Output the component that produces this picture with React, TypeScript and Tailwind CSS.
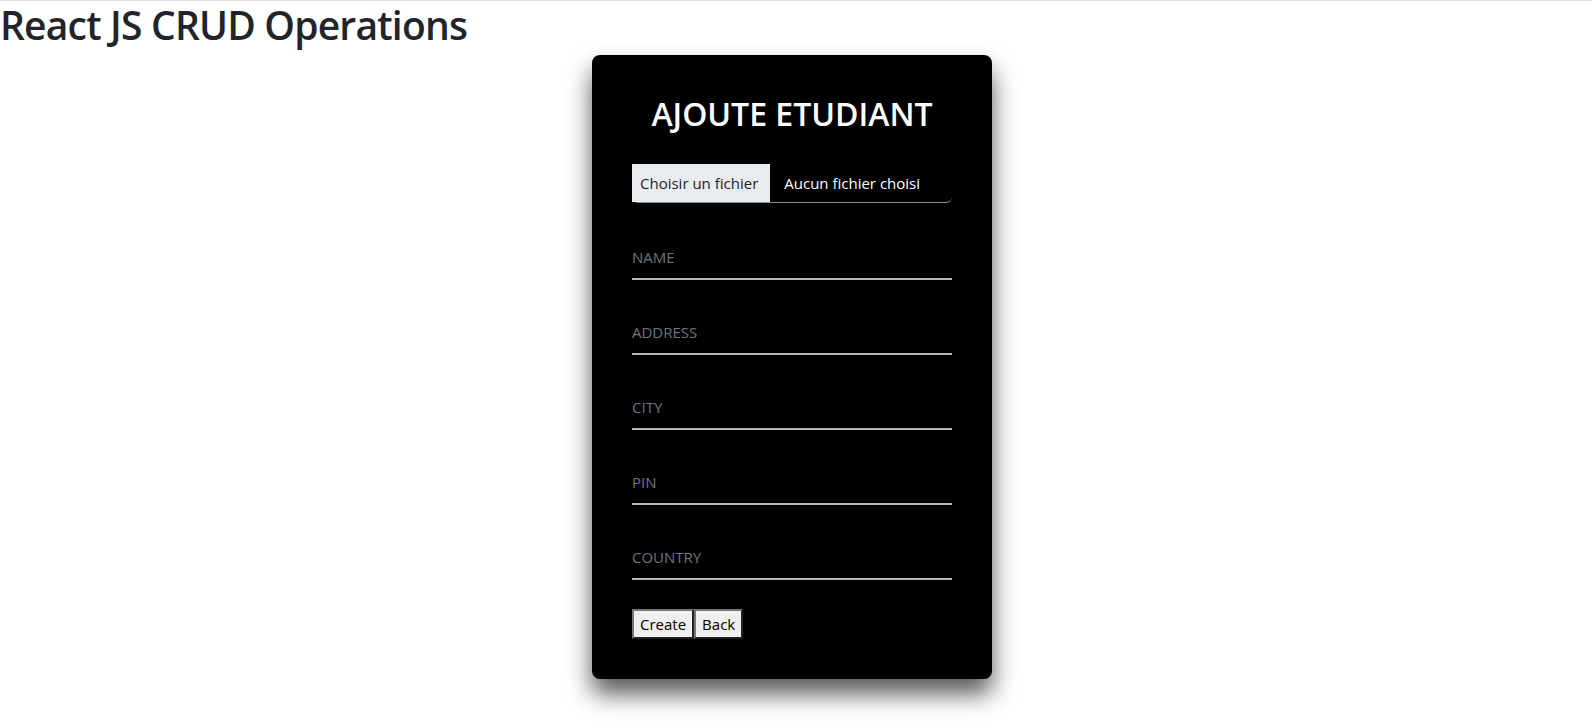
import React from "react";

const font = { fontFamily: '"Segoe UI", "Open Sans", "Noto Sans", sans-serif' };

function Field({ label, first }: { label: string; first?: boolean }) {
  return (
    <div className={first ? "mt-[37px]" : "mt-[35px]"}>
      <input
        placeholder={label}
        className="block w-full h-[40px] bg-transparent border-0 border-b-2 border-[#b8b8b8] outline-none text-[15px] text-white placeholder:text-[#6c757d] px-0 pt-0 pb-[5px]"
      />
    </div>
  );
}

export default function App() {
  return (
    <div className="min-h-[727px] bg-white border-t border-[#e0e0e0]" style={font}>
      <h1 className="m-0 text-[39px] leading-[48px] font-semibold tracking-[-0.8px] text-[#212529]">React JS CRUD Operations</h1>
      <div className="pr-2">
        <div className="mx-auto mt-[6px] w-[400px] bg-black rounded-lg px-10 pt-10 pb-10 shadow-[0_15px_25px_rgba(0,0,0,0.65)]">
          <h2 className="m-0 text-center text-[32px] leading-[38px] font-semibold text-white">AJOUTE ETUDIANT</h2>
          <div className="mt-[31px] flex h-[39px] items-stretch rounded-md border-b border-[#8a8a8a]">
            <div className="flex items-center bg-[#e9ecef] pl-2 pr-3 text-[15px] text-[#212529]">Choisir un fichier</div>
            <div className="flex items-center pl-[14px] text-[15px] text-white">Aucun fichier choisi</div>
          </div>
          <Field label="NAME" first />
          <Field label="ADDRESS" />
          <Field label="CITY" />
          <Field label="PIN" />
          <Field label="COUNTRY" />
          <div className="mt-[29px] flex">
            <button className="h-[30px] px-[6px] bg-[#efefef] border-2 border-[#767676] [border-style:outset] text-[15px] text-black">Create</button>
            <button className="h-[30px] px-[6px] bg-[#efefef] border-2 border-[#767676] [border-style:outset] text-[15px] text-black">Back</button>
          </div>
        </div>
      </div>
    </div>
  );
}
